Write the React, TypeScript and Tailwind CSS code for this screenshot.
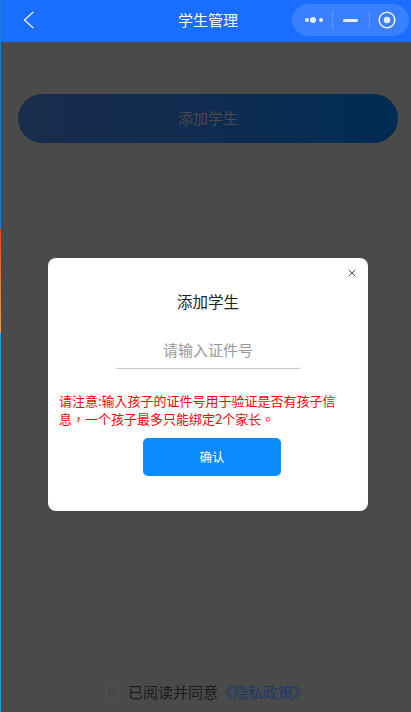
import { Check, X } from "lucide-react";

const FONT = "font-['Noto_Sans_CJK_SC','Noto_Sans',sans-serif]";

function Capsule() {
	return (
		<div className="flex items-center h-8 w-[117px] mb-[2px] rounded-full bg-[#3a7fff] pl-[13px]">
			<svg width="18" height="8" viewBox="0 0 18 8" className="shrink-0">
				<circle cx="2" cy="4" r="2" fill="#e4edff" />
				<circle cx="8" cy="4" r="3" fill="#e4edff" />
				<circle cx="16" cy="4" r="2" fill="#e4edff" />
			</svg>
			<div className="w-px h-[18px] bg-[#5a94ff] ml-[9px]" />
			<div className="w-[15px] h-[3px] rounded-full bg-[#e4edff] ml-[10px]" />
			<div className="w-px h-[18px] bg-[#5a94ff] ml-[11px]" />
			<svg width="18" height="18" viewBox="0 0 18 18" className="ml-[8px] shrink-0">
				<circle cx="9" cy="9" r="7.8" fill="none" stroke="#e4edff" strokeWidth="1.6" />
				<circle cx="9" cy="9" r="3.3" fill="#e4edff" />
			</svg>
		</div>
	);
}

function Header() {
	return (
		<div className="relative flex items-center justify-between h-[42px] bg-[#1a6eff] pl-[22px] pr-[2px] shrink-0">
			<svg width="12" height="18" viewBox="0 0 12 18" className="mb-[2px]">
				<path d="M10.3 1 L1.5 9 L10.3 17" fill="none" stroke="#e4edff" strokeWidth="1.4" />
			</svg>
			<span className="absolute left-[177px] top-[9px] text-[15px] leading-[22px] text-white">学生管理</span>
			<Capsule />
		</div>
	);
}

function Modal() {
	return (
		<div className="absolute left-[48px] top-[258px] w-[320px] h-[253px] rounded-[8px] bg-white flex flex-col">
			<X className="absolute right-[10px] top-[9px] text-[#222]" size={12} strokeWidth={1.6} />
			<div className="mt-[32px] text-center text-[15.5px] leading-[22px] text-[#222]">添加学生</div>
			<div className="mx-auto mt-[27px] w-[187px] h-[30px] border-b border-[#c9c9c9] rounded-b-[3px] text-center text-[15px] leading-[22px] text-[#999]">
				请输入证件号
			</div>
			<p className="mt-[23px] pl-[11px] pr-[20px] text-[13px] leading-[18px] text-[#ff0000] font-['Noto_Sans_CJK_TC',sans-serif]">
				{"请注意:输入孩子的证件号用于验证是否有孩子信息\uFF0C一个孩子最多只能绑定2个家长\u3002"}
			</p>
			<button className="ml-[95px] mt-[10px] w-[138px] h-[38px] rounded-[5px] bg-[#0a8cff] text-white text-[12.5px]">
				确认
			</button>
		</div>
	);
}

export default function App() {
	return (
		<div className={`relative flex w-[411px] h-[712px] overflow-hidden bg-[#4a4a4a] ${FONT}`}>
			{/* thin strip on the left edge */}
			<div className="flex flex-col w-px shrink-0">
				<div className="h-[229px] bg-[#0f7fd8]" />
				<div className="h-[104px] bg-gradient-to-b from-[#e8480f] to-[#e0a050]" />
				<div className="flex-1 bg-[#1f9fe8]" />
			</div>
			<div className="flex flex-col flex-1 min-w-0">
				<Header />
				<div className="mt-[52px] ml-[17px] mr-[13px] h-[49px] rounded-full bg-gradient-to-r from-[#1a2c4c] to-[#002c54] flex items-center justify-center text-[15px] text-[#4a4a4a]">
					添加学生
				</div>
				<div className="mt-auto mb-[9px] flex items-center justify-center pl-[2px] h-[22px]">
					<div className="flex items-center justify-center w-[12px] h-[12px] mr-[10px] border border-[#505050] rounded-[2px]">
						<Check size={9} strokeWidth={2} className="text-[#1c3a6e]" />
					</div>
					<span className="text-[15px] text-[#1a1a1a]">已阅读并同意</span>
					<span className="text-[15px] text-[#1c3a6e]">《隐私政策》</span>
				</div>
			</div>
			<Modal />
		</div>
	);
}
